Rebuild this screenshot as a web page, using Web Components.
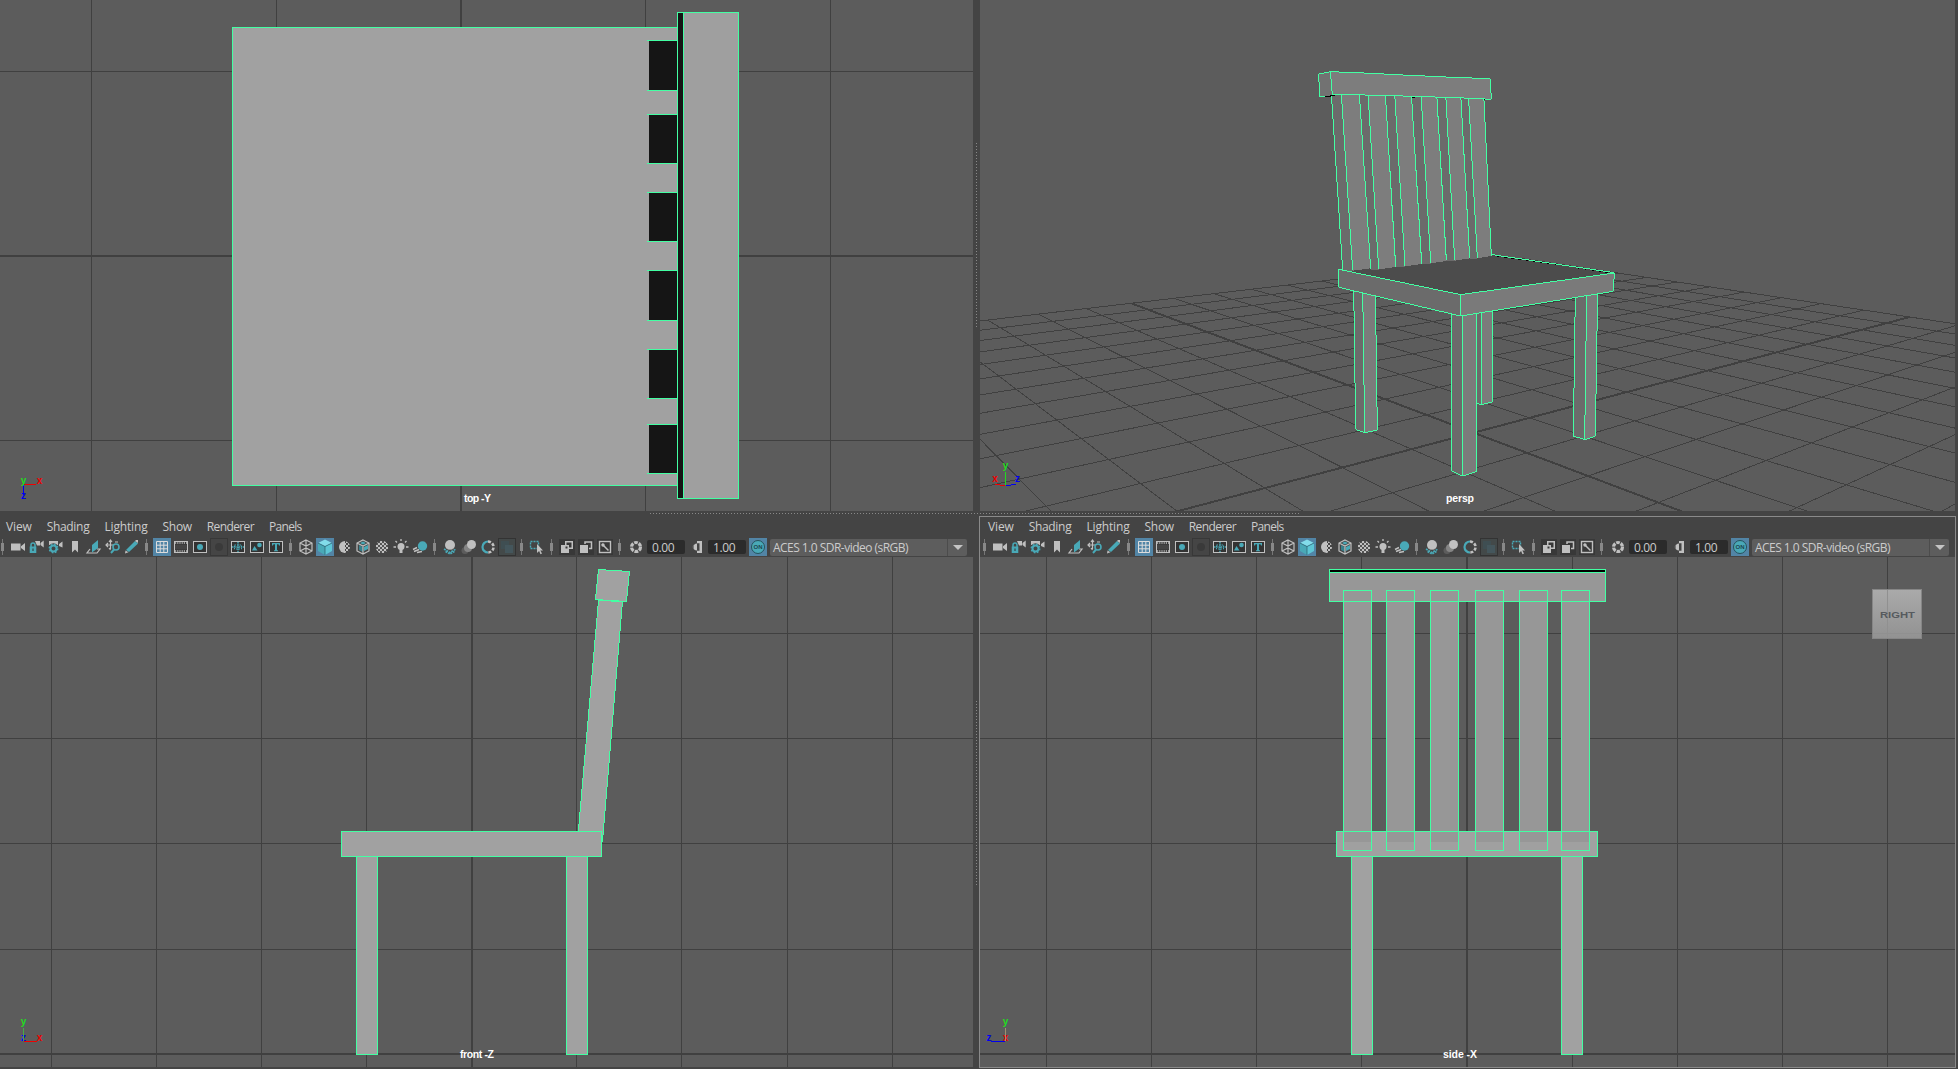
<!DOCTYPE html>
<html lang="en">
<head>
<meta charset="utf-8">
<title>Four view modeling layout</title>
<style>
  html, body { margin: 0; height: 100%; background: #444; overflow: hidden; }
  body { font-family: "Open Sans", "Noto Sans", sans-serif; }
</style>
</head>
<body>
<four-view></four-view>

<script>
const define = (name, html, setup) => {
  const t = document.createElement('template');
  t.innerHTML = html;
  customElements.define(name, class extends HTMLElement {
    constructor() {
      super();
      this.attachShadow({ mode: 'open' }).append(t.content.cloneNode(true));
    }
    connectedCallback() { if (setup) setup(this, this.shadowRoot); }
  });
};

const G = '#c0c0c0', T = '#49a9b7';
const frame = `<rect x="2.5" y="3.5" width="13" height="11" fill="#333" stroke="${G}"/>`;
const cubeEdges = 'M9 2L15 5V13L9 16L3 13V5ZM3 5L9 8L15 5M9 8V16';
const checks = (x0, x1) => {
  let s = '';
  for (let y = 3; y < 15; y += 2) for (let x = x0; x < x1; x += 2)
    if (((x + y) / 2 | 0) % 2) s += `M${x} ${y}h2v2h-2z`;
  return s;
};
const ICONS = {
  camera: `<path fill="${G}" d="M2 5.5h9.5v7H2zM12 8.3L16 5v8l-4-3z"/>`,
  lockcam: `<path fill="${G}" d="M7 3h5v4.500H9zM12.500 5L15.700 2.500v7L12.500 7z"/><path d="M3 9V7a2 2 0 0 1 4 0V9" fill="none" stroke="${T}" stroke-width="1.500"/><path fill="${T}" d="M1.700 8.500h6.600v6.500H1.700z"/><path fill="#333" d="M4.500 10.500h1v2.500h-1z"/>`,
  gearcam: `<path fill="${G}" d="M2 3h9v4H2zM12 6L15.500 3.500v6L12 8z"/><circle cx="6.500" cy="10.500" r="4.300" fill="none" stroke="#444" stroke-width="2"/><circle cx="6.500" cy="10.500" r="3" fill="none" stroke="${T}" stroke-width="2"/><circle cx="6.500" cy="10.500" r="4.300" fill="none" stroke="${T}" stroke-width="1.300" stroke-dasharray="1.700 1.670"/>`,
  bookmark: `<path fill="${G}" d="M6 3h6v11.500L9 11.500 6 14.500z"/>`,
  plane: `<path fill="none" stroke="${G}" stroke-width="1.200" d="M5 11L2 15h10l3-4h-3"/><path fill="${T}" d="M7 7l6-5v8l-6 4.500z"/>`,
  panzoom: `<path fill="none" stroke="${G}" stroke-width="1.200" d="M2 7h9M6.500 2.500V11M4 5L2 7l2 2M5 4l1.500-2L8 4M5 10l1.500 2M11 4l3 0"/><circle cx="12" cy="9" r="3" fill="#444" stroke="${T}" stroke-width="1.600"/><path d="M10 11.500L7 15" stroke="${T}" stroke-width="2"/>`,
  pencil: `<path fill="${T}" d="M3 12l9-9 3 2.500L6 14z"/><path fill="${G}" d="M2.500 12.500L5.500 14.300 2 15.500zM12 3l1-1h2v3z"/>`,
  grid: `<path fill="none" stroke="#ddd" d="M3.500 3.500h11v11h-11zM3.500 7.200h11M3.500 10.800h11M7.200 3.500v11M10.800 3.500v11"/>`,
  film: `<rect x="2.500" y="3.500" width="13" height="11" fill="#333" stroke="${G}"/><path d="M3 5h12M3 13h12" stroke="${G}" stroke-width="1.500" stroke-dasharray="1.200 1"/><path fill="#444" d="M3 6.500h12v5H3z"/>`,
  gate: `${frame}<circle cx="9" cy="9" r="3" fill="${T}"/>`,
  mask: `<rect x=".5" y=".5" width="17" height="17" fill="#454545" stroke="#383838"/><circle cx="9" cy="9" r="4" fill="#3a3a3a"/>`,
  chart: `${frame}<path d="M3 9h12M9 4v10" stroke="${T}" stroke-width="1.500" stroke-dasharray="1.500 .7"/><rect x="5.500" y="7" width="7" height="4" fill="none" stroke="${T}" stroke-dasharray="1.500 1"/>`,
  safe: `${frame}<circle cx="11.500" cy="7" r="2.300" fill="${T}"/><path fill="${T}" d="M6.500 8l3 4.500H4z"/>`,
  title: `${frame}<path fill="${T}" d="M5 5h8v2.500h-1L11.500 6.300H10V12l1 .5v.7H7v-.7l1-.5V6.300H6.500L6 7.500H5z"/>`,
  wire: `<path fill="none" stroke="${G}" stroke-width="1.200" d="${cubeEdges}M3 13L9 10L15 13M9 2V10"/>`,
  cube: `<path fill="#82dcea" d="M9 1.500L16 5 9 8.500 2 5z"/><path fill="${T}" d="M2 5l7 3.500V17L2 13z"/><path fill="#5dc6d5" d="M16 5L9 8.500V17l7-4z"/><path fill="none" stroke="#285b6b" stroke-width=".7" d="M2 5L9 8.500 16 5M9 8.500V17"/>`,
  half: `<circle cx="9" cy="9" r="6" fill="#444"/><path fill="${G}" d="M10 3a6 6 0 1 0 0 12z"/><clipPath id="h"><circle cx="9" cy="9" r="6"/></clipPath><path clip-path="url(#h)" fill="${G}" d="${checks(9, 15)}"/>`,
  texcube: `<path fill="#397f8b" d="M5 7l4 2v5l-4-2z"/><path fill="${T}" d="M10 9l4-2v4l-4 2zM9 3.500L12 5 9 6.500 6 5z"/><path fill="none" stroke="${G}" stroke-width="1.200" d="${cubeEdges}"/>`,
  checker: `<clipPath id="c"><circle cx="9" cy="9" r="6.300"/></clipPath><circle cx="9" cy="9" r="6" fill="#555"/><path clip-path="url(#c)" fill="${G}" d="${checks(3, 15)}"/>`,
  light: `<circle cx="9" cy="8.500" r="3.500" fill="${G}"/><path fill="${G}" d="M7.500 11h3v4h-3z"/><path stroke="${G}" stroke-width="1.300" d="M9 1v2M3.500 3L5 4.500M14.500 3L13 4.500M1.500 9h2.500M14 9h2.500"/>`,
  shadow: `<path fill="none" stroke="${G}" stroke-width="1.400" d="M2 11.500l4-2M3 13.500l5-2M6 14.500l5-1"/><circle cx="11.500" cy="8" r="4.700" fill="${T}"/>`,
  ao: `<path fill="none" stroke="${T}" stroke-width="1.600" stroke-dasharray="2 .8" d="M3 11l6 3.500 6-3.500M4.500 13.500L9 16l4.500-2.500"/><circle cx="9" cy="7" r="5" fill="${G}"/><path fill="#888" d="M5 10q4 2.500 8 0-4 4-8 0z"/>`,
  motion: `<circle cx="5" cy="12.500" r="3.500" fill="#5c5c5c"/><circle cx="8" cy="10" r="4" fill="#858585"/><circle cx="11.500" cy="6.500" r="4.500" fill="${G}"/>`,
  aa: `<path fill="none" stroke="${T}" stroke-width="2.200" d="M9 3.500a5.500 5.500 0 0 0 0 11"/><path fill="none" stroke="${G}" stroke-width="2.600" stroke-dasharray="3 1.500" d="M9 3.500a5.500 5.500 0 0 1 0 11"/>`,
  ghost: `<rect x=".5" y=".5" width="17" height="17" fill="#434949" stroke="#333"/><path fill="#3f4e52" d="M3 3h8v8H3z"/><path fill="#44565c" d="M7 7h8v8H7z"/>`,
  select: `<rect x="2.500" y="3.500" width="8" height="7" fill="none" stroke="${T}" stroke-width="1.400" stroke-dasharray="2 1"/><path fill="${G}" d="M9 6l6 6.500h-2.700L14 15.500l-1.500.8-1.400-3.200L9 15z"/>`,
  iso1: `<rect x="1" y="1" width="16" height="16" fill="#383838"/><path fill="${G}" d="M7 3h8v8h-4v4H3V7h4z"/><path fill="#383838" d="M8.500 4.500h5v5h-2.500V7H8.500zM7.500 8.500h2v2h-2z"/>`,
  iso2: `<rect x="1" y="1" width="16" height="16" fill="#383838"/><path fill="none" stroke="${G}" stroke-width="1.500" d="M8 6V4h6.500v6.500H12"/><path fill="${G}" d="M3 7h8v8H3z"/>`,
  iso3: `<rect x="1" y="1" width="16" height="16" fill="#383838"/><rect x="3.500" y="3.500" width="11" height="11" fill="none" stroke="${G}" stroke-width="1.400"/><path stroke="${G}" stroke-width="1.500" d="M6 6l6.500 6.500"/><circle cx="7" cy="7" r="1.700" fill="${G}"/>`,
  aperture: `<circle cx="9" cy="9" r="4.500" fill="none" stroke="${G}" stroke-width="3.200" stroke-dasharray="3.700 1"/>`,
  contrast: `<path fill="${G}" d="M9 3h5v12H9v-2.300h2.500V5.300H9z"/><path fill="${G}" d="M9 5.500v7a3.500 3.500 0 0 1 0-7z"/><path fill="#777" d="M6 6.500a3 3 0 0 0 0 5z"/>`
};

/* One square tool button */
define('tool-icon', `<style>
  :host { display: block; width: 18px; height: 18px; flex: none; }
  :host([on]) { background: #5285a6; }
  svg { display: block; }
</style><svg width="18" height="18"></svg>`, (el, r) => {
  r.querySelector('svg').innerHTML = ICONS[el.getAttribute('name')];
});

/* Group handle between tools */
define('tool-sep', `<style>
  :host { display: flex; flex: none; width: 10px; height: 16px; padding-left: 4px; box-sizing: border-box; align-items: center;
    background: linear-gradient(#777, #777) 4px 0 / 1px 16px no-repeat; }
  i { display: block; width: 3px; height: 8px; margin-left: -1px; background: #888; }
  :host([first]) { width: 8px; padding-left: 2px; background-position: 2px 0; }
  :host([wide]) { width: 11px; }
</style><i></i>`);

define('num-field', `<style>
  :host { display: block; flex: none; width: 38px; height: 14px; box-sizing: border-box; padding-left: 5px;
    background: #2b2b2b; border-radius: 2px; color: #ccc; font-size: 12px; line-height: 15px; letter-spacing: -.4px; }
</style><slot></slot>`);

define('on-toggle', `<style>
  :host { display: flex; flex: none; width: 18px; height: 18px; background: #5285a6; align-items: center; justify-content: center; }
  b { display: block; width: 12px; height: 12px; border: 1px solid #26525c; border-radius: 50%; background: #49a9b7;
    color: #1d4650; font: bold 6px/12px "Liberation Sans", sans-serif; text-align: center; }
</style><b><slot></slot></b>`);

define('color-combo', `<style>
  :host { display: flex; flex: none; width: 197px; height: 17px; margin-left: 2px; background: #5d5d5d; border-radius: 2px;
    color: #ccc; font-size: 12px; line-height: 18px; letter-spacing: -.53px; }
  span { flex: 1; padding-left: 3px; white-space: nowrap; }
  div { width: 19px; border-left: 1px solid #4c4c4c; display: flex; align-items: center; justify-content: center; }
  div::before { content: ""; border: 5px solid transparent; border-top-color: #c4c4c4; border-bottom: 0; }
</style><span><slot></slot></span><div></div>`);

define('menu-bar', `<style>
  :host { display: flex; gap: 15px; height: 21px; padding-left: 6px; color: #ccc; font-size: 12px; line-height: 20px; }
  span { letter-spacing: -.15px; }
  .b { letter-spacing: -.3px; }
  .c { letter-spacing: -.62px; }
  .d { letter-spacing: -.7px; }
</style><span>View</span><span class="b">Shading</span><span>Lighting</span><span class="b">Show</span><span class="c">Renderer</span><span class="d">Panels</span>`);

const icons = (...n) => n.map(x => `<tool-icon name="${x}"${x === 'grid' || x === 'cube' ? ' on' : ''}></tool-icon>`).join('');
define('tool-bar', `<style>
  :host { display: flex; gap: 1px; height: 18px; align-items: center; }
  num-field { margin-left: 1px; }
  .gap { margin-left: 2px; }
  on-toggle { margin-left: 2px; }
</style><tool-sep first></tool-sep>${icons('camera', 'lockcam', 'gearcam', 'bookmark', 'plane', 'panzoom', 'pencil')}
<tool-sep></tool-sep>${icons('grid', 'film', 'gate', 'mask', 'chart', 'safe', 'title')}
<tool-sep></tool-sep>${icons('wire', 'cube', 'half', 'texcube', 'checker', 'light', 'shadow')}
<tool-sep></tool-sep>${icons('ao', 'motion', 'aa', 'ghost')}
<tool-sep></tool-sep>${icons('select')}
<tool-sep></tool-sep>${icons('iso1', 'iso2', 'iso3')}
<tool-sep wide></tool-sep>${icons('aperture')}<num-field>0.00</num-field>
<tool-icon class="gap" name="contrast"></tool-icon><num-field>1.00</num-field>
<on-toggle>ON</on-toggle><color-combo>ACES 1.0 SDR-video (sRGB)</color-combo>`);

/* ---- scene drawing helpers ---- */
const GREEN = '#43ffa3', LINE = '#404040';
const gridLines = (box, vs, hs, tv, th) => {
  const [x, y, w, h] = box;
  let s = '';
  for (const v of vs) s += `<rect x="${v}" y="${y}" width="${v === tv ? 2 : 1}" height="${h}"/>`;
  for (const v of hs) s += `<rect x="${x}" y="${v}" width="${w}" height="${v === th ? 2 : 1}"/>`;
  return `<g fill="${LINE}">${s}</g>`;
};
const box = (x, y, x2, y2, fill) =>
  `<rect x="${x + .5}" y="${y + .5}" width="${x2 - x}" height="${y2 - y}" fill="${fill}" stroke="${GREEN}"/>`;
const label = (x, y, w, s) =>
  `<text x="${x}" y="${y}" textLength="${w}" text-anchor="middle" fill="#fff" font-size="10.500">${s}</text>`;
const axisText = (x, y, c, s) => `<text x="${x}" y="${y}" fill="${c}" font-size="10" text-anchor="middle">${s}</text>`;
const line = (x1, y1, x2, y2, c) => `<path d="M${x1} ${y1}L${x2} ${y2}" stroke="${c}"/>`;
const R = '#f00000', GR = '#1fdc1f', B = '#0000f0';

function topScene() {
  let s = gridLines([0, 0, 973, 511], [91, 276, 460, 645, 830], [71, 255, 440], 460, 255);
  s += box(232, 27, 678, 485, '#a1a1a1');
  for (const [a, b] of [[40, 90], [114, 163], [192, 241], [270, 320], [349, 398], [424, 473]])
    s += `<rect x="649" y="${a}" width="28" height="${b - a}" fill="#151515"/>` +
      line(647, a + .5, 678, a + .5, GREEN) + line(647, b + .5, 678, b + .5, GREEN);
  s += box(677, 12, 683, 498, '#151515') + box(683, 12, 738, 498, '#9f9f9f');
  s += line(23.5, 485, 23.5, 495, B) + line(24, 484.5, 36, 484.5, R);
  s += axisText(23.5, 484, GR, 'y') + axisText(39.500, 484, R, 'x') + axisText(23.500, 499, B, 'z');
  return s + label(477.500, 502, 27, 'top -Y');
}

/* Ground plane to screen projection for the perspective camera */
const W = (u, v) => 1 - .0627 * u + .05155 * v;
const project = (u, v) => {
  const w = W(u, v);
  return [((1473.6 - 42.4 * u + 134.8 * v) / w).toFixed(2), ((432.7 - 8.23 * u + 6.7 * v) / w).toFixed(2)];
};
function perspScene() {
  let thin = '', thick = '';
  for (let k = -12; k <= 12; k++) {
    const uMax = Math.min(12, (.95 + .05155 * k) / .0627);
    const vMin = Math.max(-12, (-.95 + .0627 * k) / .05155);
    const d = `M${project(-12, k)}L${project(uMax, k)}M${project(k, 12)}L${project(k, vMin)}`;
    if (k === 0) thick += d; else thin += d;
  }
  let s = `<path d="${thin}" stroke="${LINE}" fill="none"/><path d="${thick}" stroke="${LINE}" stroke-width="2" fill="none"/>`;
  const leg = (a, m, b) => `<polygon points="${[...a, ...m.slice().reverse()].join(' ')}" fill="#6b6b6b"/><polygon points="${[...m, ...b.slice().reverse()].join(' ')}" fill="#7b7b7b"/>
    <path d="M${a.join('L')}L${m[1]}L${b[1]}L${b[0]}M${m.join('L')}" fill="none"/>`;
  s += `<g transform="translate(1280 230) scale(.33333)" stroke="${GREEN}" stroke-width="3">`;
  s += leg(['588,240', '590,520'], ['604,240', '604,524'], ['637,235', '637,516']);
  s += leg(['221,170', '227,598'], ['248,170', '254,608'], ['286,170', '292,600']);
  s += leg(['886,190', '880,618'], ['920,190', '914,629'], ['953,180', '946,619']);
  s += leg(['515,240', '515,723'], ['547,240', '547,738'], ['589,240', '589,725']);
  s += '</g>';
  s += `<g transform="translate(1280 50) scale(.33333)" stroke-width="3">`;
  s += `<polygon points="176,658 634,613 1003,669 542,734" fill="#4c4c4c"/>`;
  s += `<path d="M650 618L990 668" stroke="#000" stroke-dasharray="8 14" fill="none"/><path d="M637 614L1003 668" stroke="${GREEN}" fill="none"/>`;
  const slats = [
    [154, 184, 238, 188, 218, 272, 660], [238, 264, 316, 272, 296, 347, 656], [316, 344, 394, 347, 375, 425, 647],
    [394, 423, 470, 425, 452, 499, 638], [470, 497, 542, 499, 524, 569, 630], [542, 565, 611, 569, 592, 634, 623]];
  for (const [a, b, c, a2, b2, c2, y] of slats)
    s += `<polygon points="${a},130 ${b},130 ${b2},${y + 4} ${a2},${y + 3}" fill="#6b6b6b"/><polygon points="${b},130 ${c},130 ${c2},${y - 5} ${b2},${y + 2}" fill="#7d7d7d"/>
      <path d="M${a} 130L${a2} ${y}M${b} 130L${b2} ${y + 1}M${c} 130L${c2} ${y - 5}" stroke="${GREEN}" fill="none"/>`;
  s += `<g stroke="${GREEN}"><polygon points="116,72 151,65 157,134 145,140 119,140" fill="#727272"/>
    <polygon points="151,65 250,69 390,76 520,82 631,86 634,148 530,143 400,139 310,136 200,134 157,134" fill="#7d7d7d"/>
    <polygon points="176,658 542,734 542,798 176,712" fill="#6b6b6b"/><polygon points="542,734 1003,669 1000,724 542,798" fill="#7a7a7a"/></g>
    <path d="M136 139H152M150 136.500H165M396 142.500H405M611 148.500H616" stroke="#000"/></g>`;
  s += line(1005.5, 472, 1005.5, 485, GR) + line(1005, 485.5, 995, 484.5, R) + line(1006, 485.5, 1016, 484.5, B);
  s += axisText(1005.5, 469, GR, 'y') + axisText(995, 482, R, 'x') + axisText(1017.500, 482, B, 'z');
  return s + label(1460, 502, 28, 'persp');
}

function frontScene() {
  let s = gridLines([0, 557, 973, 510], [51, 156, 261, 366, 471, 576, 681, 787, 892], [633, 738, 843, 949, 1053], 471, 1053);
  s += `<polygon points="598.500,600.500 622.500,601.500 602.500,841 577.500,841" fill="#a1a1a1" stroke="${GREEN}"/>`;
  s += `<polygon points="598.500,569.500 629.500,571.500 626.500,601.500 595.500,599.500" fill="#a1a1a1" stroke="${GREEN}"/>`;
  s += box(356, 856, 377, 1054, '#a1a1a1') + box(566, 856, 587, 1054, '#a1a1a1') + box(341, 831, 601, 856, '#a1a1a1');
  s += axisText(23.500, 1041, B, 'z') + line(23.5, 1028, 23.5, 1041, '#49a849') + line(24, 1041.5, 37, 1041.5, R);
  s += axisText(23.500, 1025, GR, 'y') + axisText(39.500, 1041, R, 'x');
  return s + label(477, 1058, 34, 'front -Z');
}

function sideScene() {
  let s = gridLines([980, 557, 975, 510], [1046, 1151, 1256, 1361, 1466, 1572, 1677, 1782, 1887], [633, 738, 843, 949, 1053], 1466, 1053);
  s += box(1351, 856, 1372, 1054, '#a1a1a1') + box(1561, 856, 1582, 1054, '#a1a1a1');
  s += box(1336, 831, 1597, 856, '#a1a1a1') + box(1329, 569, 1605, 572, '#000') + box(1329, 572, 1605, 601, '#979797');
  for (const x of [1343, 1386, 1430, 1475, 1519, 1561])
    s += box(x, 590, x + 28, 850, '#a0a0a0') + `<rect x="${x + 1}" y="591" width="27" height="251" fill="#979797"/>`;
  s += line(1329, 601.5, 1606, 601.5, GREEN) + line(1336, 831.5, 1598, 831.5, GREEN);
  s += axisText(1005.500, 1041, R, 'x') + line(1005.5, 1028, 1005.5, 1041, '#a09070') + line(991, 1041.5, 1005, 1041.5, B);
  s += axisText(1005.500, 1025, GR, 'y') + axisText(989, 1041, B, 'z');
  s += `<linearGradient id="vc" x1="0" y1="0" x2="0" y2="1"><stop offset="0" stop-color="#aaa"/><stop offset="1" stop-color="#929292"/></linearGradient>
    <rect x="1872.500" y="589.500" width="49" height="49" fill="url(#vc)" stroke="#868686"/>
    <path d="M1887.500 590v48M1873 633.500h49" stroke="#909090"/>
    <text x="1897.500" y="618" textLength="35" lengthAdjust="spacingAndGlyphs" text-anchor="middle" fill="#565a5e" font-size="9.500">RIGHT</text>`;
  return s + label(1460, 1058, 34, 'side -X');
}

const SCENES = { top: [topScene, '0 0 973 511'], persp: [perspScene, '980 0 975 511'], front: [frontScene, '0 557 973 510'], side: [sideScene, '980 557 975 510'] };
define('scene-view', `<style>
  :host { display: block; background: #5c5c5c; overflow: hidden; }
  svg { display: block; width: 100%; height: 100%; shape-rendering: crispEdges;
    font-family: "Liberation Sans", Arial, sans-serif; font-weight: bold; }
</style><svg></svg>`, (el, r) => {
  const [draw, vb] = SCENES[el.getAttribute('kind')];
  const svg = r.querySelector('svg');
  svg.setAttribute('viewBox', vb);
  svg.innerHTML = draw();
});

/* Viewport with its menu and tool rows */
define('view-panel', `<style>
  :host { display: flex; flex-direction: column; }
  :host([active]) { box-shadow: 0 0 0 1px #8a8a8a; }
  header { height: 40px; }
  :host([active]) header { padding-left: 2px; }
  slot { display: block; }
  ::slotted(*) { height: 510px; }
</style><header><menu-bar></menu-bar><tool-bar></tool-bar></header><slot></slot>`);

/* Dotted drag handle of a splitter */
define('split-grip', `<style>
  :host { display: block; }
  :host([dir="v"]) { width: 1px; height: 184px; background: repeating-linear-gradient(#888 0 1px, transparent 1px 3px); }
  :host([dir="h"]) { width: 651px; height: 1px; background: repeating-linear-gradient(90deg, #888 0 1px, transparent 1px 3px); }
</style>`);

define('four-view', `<style>
  :host { display: grid; grid-template-columns: 973px 7px 975px; grid-template-rows: 511px 6px 550px; width: 1958px; height: 1069px; background: #444; }
  .v { display: flex; justify-content: center; }
  .v split-grip { margin-top: 143px; }
  .v.low split-grip { margin-top: 184px; }
  .h { grid-column: 1 / 4; padding: 2px 0 0 650px; }
</style>
<scene-view kind="top"></scene-view>
<div class="v"><split-grip dir="v"></split-grip></div>
<scene-view kind="persp"></scene-view>
<div class="h"><split-grip dir="h"></split-grip></div>
<view-panel><scene-view kind="front"></scene-view></view-panel>
<div class="v low"><split-grip dir="v"></split-grip></div>
<view-panel active><scene-view kind="side"></scene-view></view-panel>`);
</script>
</body>
</html>
